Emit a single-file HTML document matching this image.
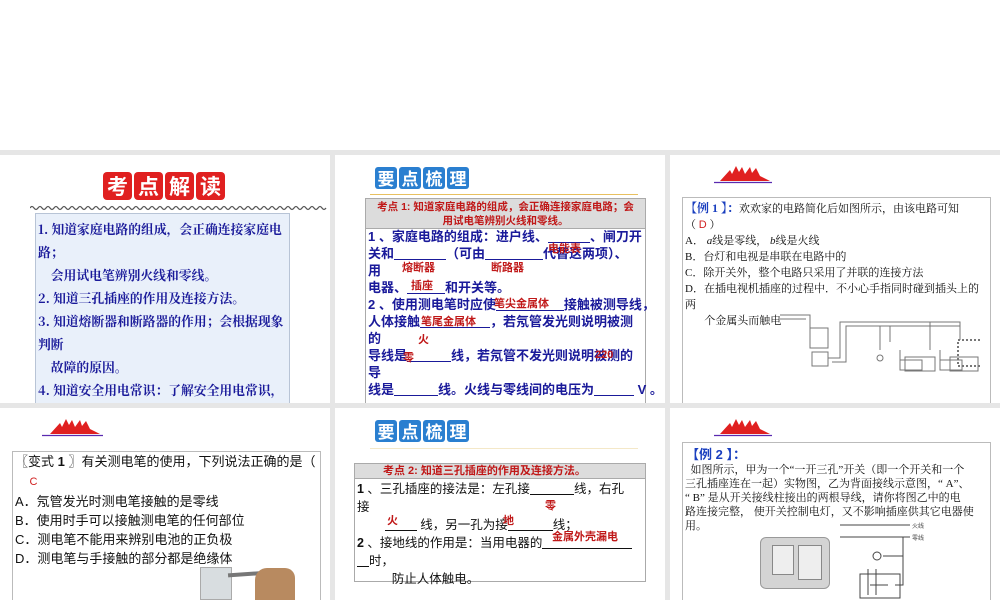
<!DOCTYPE html>
<html><head><meta charset="utf-8">
<style>
*{margin:0;padding:0;box-sizing:border-box}
body{width:1000px;height:600px;background:#fff;position:relative;overflow:hidden;font-family:"Liberation Sans","Noto Sans CJK SC",sans-serif}
.a{position:absolute}
.gray{position:absolute;left:0;top:150px;width:1000px;height:450px;background:#e6e6e6}
.slide{position:absolute;background:#fff}
.tb{position:absolute;display:flex;gap:2px}
.tb span{display:block;width:22px;height:22px;border-radius:3px;color:#fff;font-weight:bold;font-size:17px;line-height:22px;text-align:center;font-family:"Noto Sans CJK SC",sans-serif}
.red span{background:#e02020;width:29px;height:28px;line-height:28px;font-size:21px;border-radius:4px}
.blue span{background:#2a7fd0}
.s1t{font-family:"Noto Serif CJK SC","Noto Sans CJK SC",serif;font-weight:bold;color:#1a1a9a;font-size:12.8px;line-height:23px;white-space:nowrap}
.bl{color:#1a1a9a;font-weight:bold;font-size:13px;line-height:17px;white-space:nowrap}
.rd{color:#c01818;font-weight:bold;font-size:11px;position:absolute;white-space:nowrap}
.tx{font-size:11px;color:#111;white-space:nowrap;line-height:16px;font-family:"Liberation Serif","Noto Serif CJK SC",serif}
.tx2{font-size:13px;color:#111;white-space:nowrap;line-height:19px;font-family:"Liberation Sans","Noto Sans CJK SC",sans-serif}
u{text-decoration:none;display:inline-block;border-bottom:1px solid #1a1a9a;height:13px;vertical-align:-2px}
</style></head><body>
<div class="gray"></div>
<div class="slide" style="left:0;top:155px;width:330px;height:248px"></div>
<div class="slide" style="left:335px;top:155px;width:330px;height:248px"></div>
<div class="slide" style="left:670px;top:155px;width:330px;height:248px"></div>
<div class="slide" style="left:0;top:408px;width:330px;height:192px"></div>
<div class="slide" style="left:335px;top:408px;width:330px;height:192px"></div>
<div class="slide" style="left:670px;top:408px;width:330px;height:192px"></div>

<!-- slide 1 -->
<div class="tb red" style="left:103px;top:172px"><span>考</span><span>点</span><span>解</span><span>读</span></div>
<svg class="a" style="left:30px;top:205px" width="298" height="6"><path d="M0 3 Q2 0 4 3 T8 3 T12 3 T16 3 T20 3 T24 3 T28 3 T32 3 T36 3 T40 3 T44 3 T48 3 T52 3 T56 3 T60 3 T64 3 T68 3 T72 3 T76 3 T80 3 T84 3 T88 3 T92 3 T96 3 T100 3 T104 3 T108 3 T112 3 T116 3 T120 3 T124 3 T128 3 T132 3 T136 3 T140 3 T144 3 T148 3 T152 3 T156 3 T160 3 T164 3 T168 3 T172 3 T176 3 T180 3 T184 3 T188 3 T192 3 T196 3 T200 3 T204 3 T208 3 T212 3 T216 3 T220 3 T224 3 T228 3 T232 3 T236 3 T240 3 T244 3 T248 3 T252 3 T256 3 T260 3 T264 3 T268 3 T272 3 T276 3 T280 3 T284 3 T288 3 T292 3 T296 3" fill="none" stroke="#555" stroke-width="1.2"/></svg>
<div class="a" style="left:35px;top:213px;width:255px;height:190px;background:#e9f0fa;border:1px solid #b8c4d6;border-bottom:none"></div>
<div class="a s1t" style="left:38px;top:217px">1. 知道家庭电路的组成，会正确连接家庭电<br>路；<br>&nbsp;&nbsp;&nbsp;&nbsp;会用试电笔辨别火线和零线。<br>2. 知道三孔插座的作用及连接方法。<br>3. 知道熔断器和断路器的作用；会根据现象<br>判断<br>&nbsp;&nbsp;&nbsp;&nbsp;故障的原因。<br>4. 知道安全用电常识：了解安全用电常识，</div>

<!-- slide 2 -->
<div class="tb blue" style="left:375px;top:167px"><span>要</span><span>点</span><span>梳</span><span>理</span></div>
<div class="a" style="left:370px;top:194px;width:268px;height:1px;background:#e8c060"></div>
<div class="a" style="left:365px;top:198px;width:281px;height:205px;border:1px solid #aaa;border-bottom:none"></div>
<div class="a" style="left:366px;top:199px;width:279px;height:30px;background:#dcdcdc;border-bottom:1px solid #aaa;color:#c01818;font-weight:bold;font-size:10.5px;text-align:center;line-height:14px;padding-top:1px">考点 1: 知道家庭电路的组成，会正确连接家庭电路；会<br>用试电笔辨别火线和零线。</div>
<div class="a bl" style="left:368px;top:228px">1 、家庭电路的组成：进户线、<u style="width:42px"></u>、闸刀开<br>关和<u style="width:52px"></u>（可由<u style="width:58px"></u>代替这两项）、<br>用<br>电器、<u style="width:38px"></u>和开关等。<br>2 、使用测电笔时应使<u style="width:68px"></u>接触被测导线，<br>人体接触<u style="width:70px"></u>，若氖管发光则说明被测<br>的<br>导线是<u style="width:44px"></u>线，若氖管不发光则说明被测的<br>导<br>线是<u style="width:44px"></u>线。火线与零线间的电压为<u style="width:40px"></u> V 。</div>
<div class="rd" style="left:548px;top:240px">电能表</div>
<div class="rd" style="left:402px;top:259px">熔断器</div>
<div class="rd" style="left:491px;top:259px">断路器</div>
<div class="rd" style="left:411px;top:277px">插座</div>
<div class="rd" style="left:494px;top:295px">笔尖金属体</div>
<div class="rd" style="left:421px;top:313px">笔尾金属体</div>
<div class="rd" style="left:418px;top:331px">火</div>
<div class="rd" style="left:403px;top:349px">零</div>
<div class="rd" style="left:595px;top:349px">220</div>

<!-- slide 3 -->
<svg class="a" style="left:712px;top:164px" width="62" height="20"><path d="M8 17 L18 6 L20 10 L24 2 L27 8 L30 3 L33 10 L38 3 L40 9 L44 4 L48 12 L58 17 Z" fill="#e02020"/><line x1="2" y1="18.5" x2="60" y2="18.5" stroke="#5a2ab0" stroke-width="1.2"/></svg>
<div class="a" style="left:682px;top:197px;width:309px;height:206px;border:1px solid #bbb;border-bottom:none"></div>
<div class="a tx" style="left:685px;top:200px"><b style="color:#1a3fbf;font-size:12px">【例 1 】：</b>欢欢家的电路简化后如图所示，由该电路可知<br>（ <span style="color:#d02020;font-family:'Liberation Sans'">D</span> ）<br>A． <i>a</i>线是零线， <i>b</i>线是火线<br>B．台灯和电视是串联在电路中的<br>C．除开关外，整个电路只采用了并联的连接方法<br>D．在插电视机插座的过程中．不小心手指同时碰到插头上的<br>两<br>&nbsp;&nbsp;&nbsp;&nbsp;&nbsp;&nbsp;&nbsp;个金属头而触电</div>
<svg class="a" style="left:780px;top:310px" width="200" height="70" stroke="#777" fill="none" stroke-width="1"><path d="M0 5 H30 V18 M0 9 H26 M30 18 h18 v20 h-18 z M32 42 h16 v14 h-16 z M48 48 H60 V12 H180 V30 M52 52 H66 V16 H180 M100 16 V40 M110 16 V32 M150 12 V40 M120 40 V60 h22 v-10 h-22 M160 40 V60 h22 v-10 h-22"/><rect x="125" y="47" width="30" height="14"/><rect x="170" y="47" width="28" height="14"/><rect x="133" y="30" width="46" height="26" stroke-dasharray="2 2" stroke-width="2" transform="translate(45 0)"/><circle cx="100" cy="48" r="3"/></svg>

<!-- row2 slide 1 -->
<svg class="a" style="left:40px;top:417px" width="66" height="20"><path d="M10 17 L20 6 L22 10 L26 2 L29 8 L32 3 L35 10 L40 3 L42 9 L46 4 L50 12 L60 17 Z" fill="#e02020"/><line x1="2" y1="18.5" x2="63" y2="18.5" stroke="#5a2ab0" stroke-width="1.2"/></svg>
<div class="a" style="left:12px;top:451px;width:309px;height:149px;border:1px solid #bbb;border-bottom:none"></div>
<div class="a tx2" style="left:15px;top:452px">〖变式 <b>1</b> 〗有关测电笔的使用，下列说法正确的是（<br>&nbsp;&nbsp;&nbsp;&nbsp;<span style="color:#d02020;font-size:11px">C</span><br>A．氖管发光时测电笔接触的是零线<br>B．使用时手可以接触测电笔的任何部位<br>C．测电笔不能用来辨别电池的正负极<br>D．测电笔与手接触的部分都是绝缘体</div>
<div class="a" style="left:200px;top:567px;width:32px;height:33px;background:#d8dde0;border:1px solid #aaa"></div>
<div class="a" style="left:228px;top:572px;width:40px;height:4px;background:#777;transform:rotate(-4deg)"></div>
<div class="a" style="left:255px;top:568px;width:40px;height:32px;background:#b88a60;border-radius:12px 10px 0 0"></div>

<!-- row2 slide 2 -->
<div class="tb blue" style="left:375px;top:420px"><span>要</span><span>点</span><span>梳</span><span>理</span></div>
<div class="a" style="left:370px;top:448px;width:268px;height:1px;background:#f4e8c8"></div>
<div class="a" style="left:354px;top:463px;width:292px;height:119px;border:1px solid #aaa"></div>
<div class="a" style="left:355px;top:464px;width:290px;height:15px;background:#dcdcdc;border-bottom:1px solid #aaa;color:#c01818;font-weight:bold;font-size:11px;line-height:15px;padding-left:28px">考点 2: 知道三孔插座的作用及连接方法。</div>
<div class="a" style="left:357px;top:480px;font-size:12.5px;line-height:18px;color:#111;white-space:nowrap"><b>1</b> 、三孔插座的接法是：左孔接<u style="width:44px;border-color:#111"></u>线，右孔<br>接<br>&nbsp;&nbsp;&nbsp;&nbsp;&nbsp;&nbsp;&nbsp;&nbsp;<u style="width:32px;border-color:#111"></u> 线，另一孔为接<u style="width:45px;border-color:#111"></u>线；<br><b>2</b> 、接地线的作用是：当用电器的<u style="width:90px;border-color:#111"></u><br><u style="width:12px;border-color:#111"></u>时，<br>&nbsp;&nbsp;&nbsp;&nbsp;&nbsp;&nbsp;&nbsp;&nbsp;&nbsp;&nbsp;防止人体触电。</div>
<div class="rd" style="left:545px;top:497px">零</div>
<div class="rd" style="left:387px;top:512px">火</div>
<div class="rd" style="left:503px;top:512px">地</div>
<div class="rd" style="left:552px;top:528px">金属外壳漏电</div>

<!-- row2 slide 3 -->
<svg class="a" style="left:712px;top:417px" width="62" height="20"><path d="M8 17 L18 6 L20 10 L24 2 L27 8 L30 3 L33 10 L38 3 L40 9 L44 4 L48 12 L58 17 Z" fill="#e02020"/><line x1="2" y1="18.5" x2="60" y2="18.5" stroke="#5a2ab0" stroke-width="1.2"/></svg>
<div class="a" style="left:682px;top:442px;width:309px;height:158px;border:1px solid #bbb;border-bottom:none"></div>
<div class="a" style="left:686px;top:444px;color:#1a3fbf;font-weight:bold;font-size:13px">【例 2 】：</div>
<div class="a tx" style="left:685px;top:463px;line-height:14px">&nbsp;&nbsp;如图所示，甲为一个“一开三孔”开关（即一个开关和一个<br>三孔插座连在一起）实物图，乙为背面接线示意图，“ A”、<br>“ B” 是从开关接线柱接出的两根导线，请你将图乙中的电<br>路连接完整， 使开关控制电灯，又不影响插座供其它电器使<br>用。</div>
<div class="a" style="left:760px;top:537px;width:70px;height:52px;background:#d4d4d4;border-radius:6px;border:1px solid #999"></div>
<div class="a" style="left:772px;top:545px;width:22px;height:30px;background:#eee;border:1px solid #888"></div>
<div class="a" style="left:798px;top:545px;width:24px;height:35px;background:#eee;border:1px solid #888"></div>
<svg class="a" style="left:840px;top:520px" width="95" height="80" stroke="#444" fill="none"><path d="M0 5 H70 M0 17 H70 M63 17 V65 H55 M43 36 H63 M28 49 V75 M36 49 V75 M30 65 H48"/><circle cx="37" cy="36" r="4"/><rect x="20" y="54" width="40" height="24"/><text x="72" y="8" font-size="6" fill="#444" stroke="none">火线</text><text x="72" y="20" font-size="6" fill="#444" stroke="none">零线</text></svg>
</body></html>
